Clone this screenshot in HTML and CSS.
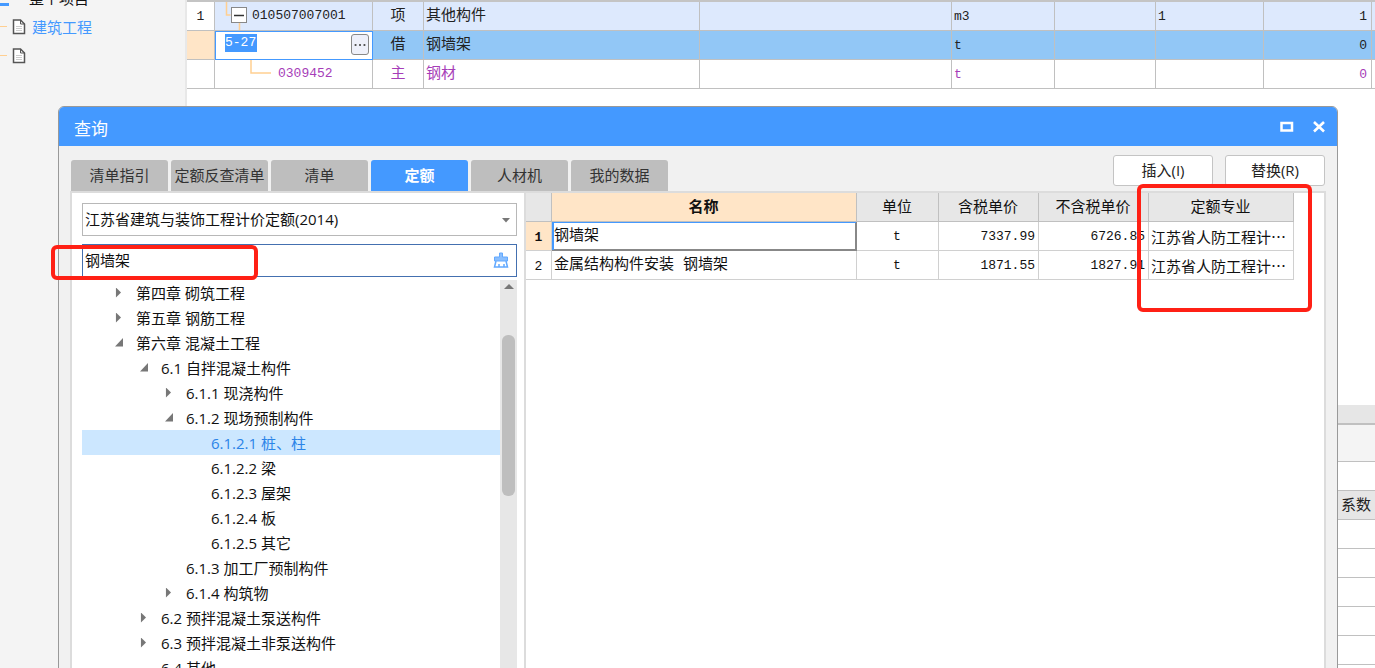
FILE: index.html
```html
<!DOCTYPE html>
<html lang="zh-CN">
<head>
<meta charset="utf-8">
<title>查询</title>
<link rel="stylesheet" href="styles.css">
</head>
<body>
<div class="app">
  <aside class="sidebar">
    <ul class="project-tree">
      <li class="project-root"><span class="root-icon"></span><span>整个项目</span></li>
      <li><span class="twig"></span>
        <svg class="doc" viewBox="0 0 14 16"><path d="M1.5 1h7l4 4v9.500h-11z" fill="#fff" stroke="#555" stroke-width="1.500"/><path d="M8.500 1v4h4" fill="none" stroke="#555"/><path d="M4 7.500h6M4 9.500h6M4 11.500h6" stroke="#ccc"/></svg>
        <a href="#">建筑工程</a></li>
      <li><span class="twig"></span>
        <svg class="doc" viewBox="0 0 14 16"><path d="M1.5 1h7l4 4v9.500h-11z" fill="#fff" stroke="#555" stroke-width="1.500"/><path d="M8.500 1v4h4" fill="none" stroke="#555"/><path d="M4 7.500h6M4 9.500h6M4 11.500h6" stroke="#ccc"/></svg></li>
    </ul>
  </aside>
  <main class="main">
    <table class="bill">
      <colgroup><col class="b-no"><col class="b-code"><col class="b-kind"><col class="b-name"><col><col class="b-unit"><col class="b-rate"><col class="b-expr"><col class="b-qty"><col class="b-rest"></colgroup>
      <tbody>
        <tr class="item">
          <td class="center no">1</td>
          <td><div class="code-cell"><svg class="branch" viewBox="0 0 32 28"><path d="M11.500 0v13h4M24.500 20v8" fill="none" stroke="#ffcf91" stroke-width="1.500"/><rect x="16.500" y="5.500" width="15" height="15" fill="#fff" stroke="#888"/><path d="M19 13.500h10" stroke="#333" stroke-width="1.500"/></svg><span>010507007001</span></div></td>
          <td class="center">项</td><td>其他构件</td><td></td><td>m3</td><td></td><td>1</td><td class="right">1</td><td></td>
        </tr>
        <tr class="current">
          <td class="marker"></td>
          <td class="editing"><div class="edit-cell"><input class="code-input" aria-label="编码" value="5-27"><button class="more" aria-label="更多"><svg viewBox="0 0 18 20"><path d="M3 9h2v2H3zM8 9h2v2H8zM13 9h2v2h-2z" fill="#555"/></svg></button></div></td>
          <td class="center">借</td><td>钢墙架</td><td></td><td>t</td><td></td><td></td><td class="right">0</td><td></td>
        </tr>
        <tr class="material">
          <td></td>
          <td><div class="code-cell"><svg class="branch-deep" viewBox="0 0 58 28"><path d="M36 0v13h20" fill="none" stroke="#ffcf91" stroke-width="1.500"/></svg><span>0309452</span></div></td>
          <td class="center">主</td><td>钢材</td><td></td><td>t</td><td></td><td></td><td class="right">0</td><td></td>
        </tr>
      </tbody>
    </table>
    <section class="detail">
      <div class="detail-bar"></div>
      <div class="detail-tools"></div>
      <table class="coef">
        <tbody>
          <tr><td></td></tr>
          <tr><th>系数</th></tr>
          <tr><td></td></tr><tr><td></td></tr><tr><td></td></tr><tr><td></td></tr><tr><td></td></tr><tr><td></td></tr>
        </tbody>
      </table>
    </section>
  </main>

  <section class="dialog" role="dialog" aria-labelledby="dialog-title">
    <header class="titlebar">
      <h1 id="dialog-title">查询</h1>
      <button class="win-btn" aria-label="最大化"><svg viewBox="0 0 14 12"><rect x="1.500" y="2" width="10.500" height="7.500" fill="none" stroke="#fff" stroke-width="2.500"/></svg></button>
      <button class="win-btn" aria-label="关闭"><svg viewBox="0 0 14 12"><path d="M2 1l10 9.500M12 1L2 10.500" stroke="#fff" stroke-width="2.600"/></svg></button>
    </header>
    <div class="toolbar">
      <div class="tabs" role="tablist">
        <button class="tab" role="tab">清单指引</button>
        <button class="tab" role="tab">定额反查清单</button>
        <button class="tab" role="tab">清单</button>
        <button class="tab tab-active" role="tab" aria-selected="true">定额</button>
        <button class="tab" role="tab">人材机</button>
        <button class="tab" role="tab">我的数据</button>
      </div>
      <div class="actions">
        <button class="action">插入(I)</button>
        <button class="action">替换(R)</button>
      </div>
    </div>
    <div class="panel">
      <div class="left">
        <div class="field">
          <select aria-label="定额库"><option>江苏省建筑与装饰工程计价定额(2014)</option></select>
          <svg class="caret" viewBox="0 0 8 5"><path d="M0 0h8L4 4.500z" fill="#777"/></svg>
        </div>
        <div class="field search">
          <input aria-label="搜索" value="钢墙架">
          <button class="clear" aria-label="清除"><svg viewBox="0 0 16 17"><path d="M6.500 1h3v4h5v4h-13V5h5z" fill="#8abfff" stroke="#62a9ff"/><path d="M3 9l-1.500 6h13L13 9" fill="none" stroke="#62a9ff" stroke-width="1.500"/><path d="M6 15v-3M11 15v-3" stroke="#62a9ff" stroke-width="1.500"/></svg></button>
        </div>
        <div class="tree-area">
          <ul class="tree" role="tree">
            <li class="l1"><button class="toggle closed" aria-label="展开"></button>第四章 砌筑工程</li>
            <li class="l1"><button class="toggle closed" aria-label="展开"></button>第五章 钢筋工程</li>
            <li class="l1"><button class="toggle open" aria-label="折叠"></button>第六章 混凝土工程</li>
            <li class="l2"><button class="toggle open" aria-label="折叠"></button>6.1 自拌混凝土构件</li>
            <li class="l3"><button class="toggle closed" aria-label="展开"></button>6.1.1 现浇构件</li>
            <li class="l3"><button class="toggle open" aria-label="折叠"></button>6.1.2 现场预制构件</li>
            <li class="l4 selected">6.1.2.1 桩、柱</li>
            <li class="l4">6.1.2.2 梁</li>
            <li class="l4">6.1.2.3 屋架</li>
            <li class="l4">6.1.2.4 板</li>
            <li class="l4">6.1.2.5 其它</li>
            <li class="l3 leaf">6.1.3 加工厂预制构件</li>
            <li class="l3"><button class="toggle closed" aria-label="展开"></button>6.1.4 构筑物</li>
            <li class="l2"><button class="toggle closed" aria-label="展开"></button>6.2 预拌混凝土泵送构件</li>
            <li class="l2"><button class="toggle closed" aria-label="展开"></button>6.3 预拌混凝土非泵送构件</li>
            <li class="l2 leaf">6.4 其他</li>
          </ul>
          <div class="scrollbar"><svg class="scroll-up" viewBox="0 0 10 5"><path d="M0 5h10L5 0z" fill="#777"/></svg><div class="thumb"></div></div>
        </div>
      </div>
      <div class="right-pane">
        <table class="quota">
          <colgroup><col class="q-no"><col><col class="q-unit"><col class="q-price"><col class="q-net"><col class="q-major"></colgroup>
          <thead><tr><th></th><th class="active-head">名称</th><th>单位</th><th>含税单价</th><th>不含税单价</th><th>定额专业</th></tr></thead>
          <tbody>
            <tr><td class="row-no row-active">1</td><td class="focus-cell">钢墙架</td><td class="center">t</td><td class="right">7337.99</td><td class="right">6726.85</td><td class="major">江苏省人防工程计…</td></tr>
            <tr><td class="row-no">2</td><td>金属结构构件安装 钢墙架</td><td class="center">t</td><td class="right">1871.55</td><td class="right">1827.91</td><td class="major">江苏省人防工程计…</td></tr>
          </tbody>
        </table>
      </div>
    </div>
  </section>
  <div class="mark mark-search"></div>
  <div class="mark mark-major"></div>
</div>
</body>
</html>
```
FILE: styles.css
```css
* { box-sizing: border-box; }
body { margin: 0; font: 15px/20px "Open Sans", "Noto Sans CJK SC", sans-serif; color: #222; }
button, input, select { font: inherit; color: inherit; margin: 0; padding: 0; border: 0; background: none; }
ul { list-style: none; margin: 0; padding: 0; }
svg { display: block; flex: none; }
table { border-collapse: separate; border-spacing: 0; table-layout: fixed; }

.app { position: relative; display: flex; height: 100vh; overflow: hidden; background: #fff; }

.sidebar { flex: none; width: 187px; background: #f4f4f4; border-right: 2px solid #e8e8e8; overflow: hidden; }
.project-tree { margin-top: -17px; }
.project-tree li { display: flex; align-items: center; height: 29px; gap: 5px; }
.project-tree .project-root { gap: 20px; color: #111; }
.root-icon { width: 9px; height: 16px; border-bottom: 3px solid #4499ff; }
.twig { width: 7px; height: 1px; background: #ffcf91; }
.doc { width: 14px; height: 16px; }
.project-tree a { margin-left: 1px; color: #4499ff; text-decoration: none; }

.main { flex: 1; min-width: 0; display: flex; flex-direction: column; justify-content: space-between; }

.bill { width: 100%; border-top: 2px solid #c4c4c4; font-family: "Liberation Mono", "Noto Sans CJK SC", monospace; }
.bill td { height: 29px; padding: 1px 2px 0; border-right: 1px solid #c0c0c0; border-bottom: 1px solid #c0c0c0; white-space: nowrap; line-height: 20px; }
.bill td, .quota td { font-size: 15px; }
.bill .center, .quota .center { text-align: center; }
.bill .right, .quota .right { text-align: right; }
.bill .right { padding-right: 4px; }
.bill .no, .bill .code-cell, .bill td:nth-child(n+6), .code-input { font-size: 13px; }
.b-no { width: 28px; } .b-code { width: 158px; } .b-kind { width: 51px; } .b-name { width: 276px; }
.b-unit { width: 103px; } .b-rate { width: 101px; } .b-expr { width: 108px; } .b-qty { width: 108px; } .b-rest { width: 3px; }
.item td { background: #dde9fd; }
.item .no { background: #fff; }
.current td { background: #92c7f6; }
.bill .current .marker { background: #ffe5c7; }
.bill td:last-child { padding: 0; border-right: 0; }
.material td { color: #a63db8; }
.bill td:nth-child(2) { padding: 0; }
.code-cell { display: flex; align-items: center; height: 28px; gap: 5px; }
.branch { width: 32px; height: 28px; }
.branch-deep { width: 58px; height: 28px; }
.bill .current .editing { background: #fff; border-color: #4499ff; }
.edit-cell { display: flex; justify-content: space-between; height: 28px; padding: 2px 3px 2px 9px; border-left: 1px solid #4499ff; border-top: 1px solid #4499ff; }
.code-input { width: 32px; height: 18px; line-height: 18px; background: #4499ff; color: #fff; }
.more { width: 18px; height: 21px; border: 1px solid #888; border-radius: 3px; background: #eef0fa; }
.more svg { width: 16px; height: 18px; }

.detail { font-size: 15px; }
.detail-bar { height: 18px; background: #e6e6e6; }
.detail-tools { height: 39px; background: #f4f4f4; border-top: 2px solid #c0c0c0; border-bottom: 1px solid #c0c0c0; }
.coef { width: 100%; height: 206px; display: block; overflow: hidden; }
.coef tbody { display: block; }
.coef tr { display: block; }
.coef td, .coef th { display: block; height: 29px; border-bottom: 1px solid #c0c0c0; padding: 3px 4px 0; text-align: right; font-weight: 400; }
.coef th { background: #e6e6e6; }

.dialog { position: absolute; top: 106px; left: 58px; right: 37px; bottom: -10px; display: flex; flex-direction: column; border: 1px solid #999; border-radius: 6px; background: #f1f1f1; overflow: hidden; }
.titlebar { flex: none; height: 39px; display: flex; align-items: center; gap: 18px; padding: 0 11px 0 15px; background: #4499ff; color: #fff; }
.titlebar h1 { flex: 1; margin: 4px 0 0; font-size: 17px; line-height: 24px; font-weight: 400; }
.win-btn, .win-btn svg { width: 14px; height: 12px; }
.toolbar { flex: none; display: flex; justify-content: space-between; height: 45px; padding: 0 12px; }
.tabs { display: flex; align-items: flex-end; gap: 3px; }
.tab { width: 97px; height: 31px; padding-bottom: 2px; background: #bebebe; color: #333; border-radius: 3px 3px 0 0; white-space: nowrap; }
.tab-active { background: #4499ff; color: #fff; font-weight: 700; }
.actions { display: flex; gap: 12px; padding-top: 9px; }
.action { width: 100px; height: 31px; padding-bottom: 2px; background: #fff; border: 1px solid #c4c4c4; border-radius: 3px; }

.panel { flex: 1; min-height: 0; display: flex; margin: 0 11px; border: 2px solid #dcdcdc; border-bottom: 0; background: #fff; }
.left { flex: none; width: 454px; display: flex; flex-direction: column; padding: 10px 7px 0 10px; border-right: 2px solid #dcdcdc; color: #111; }
.field { position: relative; flex: none; height: 33px; margin-bottom: 8px; border: 1px solid #b8b8b8; }
.field select, .field input { display: block; width: 100%; height: 31px; padding: 0 2px 2px; appearance: none; outline: none; }
.caret { position: absolute; right: 6px; top: 14px; width: 8px; height: 5px; pointer-events: none; }
.search { margin-bottom: 3px; border-color: #4470b0; }
.clear { position: absolute; right: 7px; top: 7px; }
.clear svg { width: 16px; height: 17px; }
.tree-area { flex: 1; min-height: 0; display: flex; overflow: hidden; }
.tree { flex: 1; }
.tree li { display: flex; align-items: center; height: 25px; white-space: pre; }
.l1 { padding-left: 33px; } .l2 { padding-left: 58px; } .l3 { padding-left: 83px; } .l4 { padding-left: 129px; }
.l2.leaf { padding-left: 79px; } .l3.leaf { padding-left: 104px; }
.selected { background: #cce7ff; color: #2b84e8; }
.toggle { width: 8px; height: 10px; margin-right: 13px; background: #777; }
.closed { clip-path: polygon(12% 0, 75% 50%, 12% 100%); }
.open { clip-path: polygon(100% 5%, 100% 90%, 0 90%); }
.scrollbar { width: 17px; background: #e7e7e7; padding: 4px 2px; }
.scroll-up { width: 10px; height: 5px; margin: 0 auto 46px; }
.thumb { height: 161px; border-radius: 6px; background: #bebebe; }

.right-pane { flex: 1; min-width: 0; padding-right: 30px; }
.quota { width: 100%; color: #111; font-family: "Liberation Mono", "Noto Sans CJK SC", monospace; }
.q-no { width: 26px; } .q-unit { width: 82px; } .q-price { width: 100px; } .q-net { width: 110px; } .q-major { width: 145px; }
.quota th, .quota td { height: 29px; padding: 1px 3px 0 2px; border-right: 1px solid #d0d0d0; border-bottom: 1px solid #d0d0d0; white-space: nowrap; }
.quota th { padding-top: 3px; background: #e7e7e7; border-color: #c0c0c0; font-weight: 400; }
.quota .active-head { background: #ffe5c7; font-weight: 700; }
.quota .row-no { padding: 3px 0 0; text-align: center; font-size: 13px; }
.quota .row-active { background: #ffe5c7; font-weight: 700; }
.quota .center, .quota .right { font-size: 13px; }
.quota .focus-cell { box-shadow: inset 2px 1px #4499ff, inset -1px -1px #888; border-color: #888; }
.quota .major { font-family: "Noto Sans CJK SC", sans-serif; }

.mark { position: absolute; border: 4px solid #ff2015; border-radius: 6px; pointer-events: none; }
.mark-search { left: 51px; top: 245px; width: 207px; height: 35px; }
.mark-major { right: 63px; top: 184px; width: 175px; height: 128px; }
```
